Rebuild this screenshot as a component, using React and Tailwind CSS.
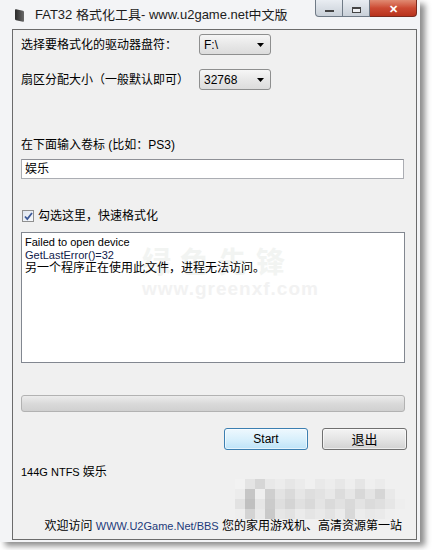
const MOSAIC = [
  ["bg-[#f2f2f2]", "bg-[#e4e4e4]", "bg-[#d6d6d6]", "bg-[#e8e8e8]", "bg-[#ececec]", "bg-[#e6e6e6]", "bg-[#ebebeb]", "bg-[#f0f0f0]", "bg-[#e9e9e9]", "bg-[#ededed]", "bg-[#e7e7e7]", "bg-[#eeeeee]", "bg-[#e5e5e5]", "bg-[#efefef]", "bg-[#ebebeb]", "bg-[#f0f0f0]", "bg-[#f0f0f0]"],
  ["bg-[#ececec]", "bg-[#c6c6c6]", "bg-[#efefef]", "bg-[#cfcfcf]", "bg-[#e3e3e3]", "bg-[#dadada]", "bg-[#e6e6e6]", "bg-[#dedede]", "bg-[#e2e2e2]", "bg-[#e8e8e8]", "bg-[#dcdcdc]", "bg-[#e6e6e6]", "bg-[#d8d8d8]", "bg-[#e4e4e4]", "bg-[#d6d6d6]", "bg-[#e9e9e9]", "bg-[#f0f0f0]"],
  ["bg-[#e2e2e2]", "bg-[#c0c0c0]", "bg-[#e6e6e6]", "bg-[#cbcbcb]", "bg-[#dedede]", "bg-[#d4d4d4]", "bg-[#e0e0e0]", "bg-[#d9d9d9]", "bg-[#e4e4e4]", "bg-[#dadada]", "bg-[#e1e1e1]", "bg-[#d9d9d9]", "bg-[#e3e3e3]", "bg-[#dbdbdb]", "bg-[#dfdfdf]", "bg-[#e6e6e6]", "bg-[#eeeeee]"],
  ["bg-[#eeeeee]", "bg-[#d3d3d3]", "bg-[#e9e9e9]", "bg-[#c9c9c9]", "bg-[#e6e6e6]", "bg-[#e2e2e2]", "bg-[#ebebeb]", "bg-[#e5e5e5]", "bg-[#e9e9e9]", "bg-[#e3e3e3]", "bg-[#ebebeb]", "bg-[#d8d8d8]", "bg-[#ececec]", "bg-[#e8e8e8]", "bg-[#eaeaea]", "bg-[#efefef]", "bg-[#f0f0f0]"],
];

function Combo({ value }) {
  return (
    <div className="flex h-[21px] w-[72px] items-center justify-between rounded-[3px] border border-[#8e8f8f] bg-gradient-to-b from-[#f6f6f6] via-[#e8e8e8] to-[#dcdcdc] pl-[4px] pr-[6px] text-[12px] leading-none text-black">
      <span>{value}</span>
      <svg width="7" height="4" viewBox="0 0 7 4">
        <path d="M0 0h7L3.5 4z" fill="#000" />
      </svg>
    </div>
  );
}

function Mosaic() {
  return (
    <div className="ml-[214px] flex flex-col">
      {MOSAIC.map((row, r) => (
        <div key={r} className="flex">
          {row.map((c, i) => (
            <div key={i} className={`h-[10px] w-[10px] ${c}`} />
          ))}
        </div>
      ))}
    </div>
  );
}

export default function App() {
  return (
    <div className="h-[550px] w-[434px] overflow-hidden bg-white font-['Liberation_Sans','Noto_Sans_CJK_SC',sans-serif] text-black">
      <div className="flex h-[542px] w-[420px] flex-col bg-[#f3f4f6] shadow-[5px_4px_6px_rgba(0,0,0,0.45)]">
        {/* title bar */}
        <div className="relative flex h-[29px] items-start">
          <div className="ml-[15px] mt-[10px] h-[11px] w-[9px] skew-y-[12deg] rounded-[1px] bg-gradient-to-r from-[#2b2b2b] to-[#6a6a6a]" />
          <div className="ml-[11px] mt-[9px] h-[13px] overflow-hidden">
            <div className="-mt-[3px] whitespace-nowrap text-[13px] leading-[18px] text-[#1c1c1c]">
              FAT32 格式化工具- www.u2game.net中文版
            </div>
          </div>
          <div className="absolute right-[3px] top-0 flex">
            <div className="flex h-[17px] w-[28px] items-end justify-center rounded-bl-[4px] border border-t-0 border-[#6f7a86] bg-gradient-to-b from-[#e9edf2] to-[#c9d0d8] pb-[4px]">
              <div className="h-[2px] w-[9px] border border-[#444] bg-white" />
            </div>
            <div className="flex h-[17px] w-[27px] items-end justify-center border border-l-0 border-t-0 border-[#6f7a86] bg-gradient-to-b from-[#e9edf2] to-[#c9d0d8] pb-[3px]">
              <div className="h-[6px] w-[9px] border border-[#444] border-t-2 bg-white/60" />
            </div>
            <div className="flex h-[17px] w-[47px] items-end justify-center rounded-br-[4px] border border-l-0 border-t-0 border-[#7a2a1e] bg-gradient-to-b from-[#e08a72] via-[#cc4a33] to-[#b8321c] pb-[1px] text-[11px] font-bold leading-none text-white">
              ✕
            </div>
          </div>
        </div>

        {/* client area */}
        <div className="ml-[12px] flex h-[511px] w-[405px] flex-col border border-[#6b6b6b] bg-[#f0f0f0] pl-[8px] text-[12px]">
          <div className="mt-[4px] flex h-[21px] items-center">
            <span className="w-[178px] leading-[14px]">选择要格式化的驱动器盘符：</span>
            <Combo value="F:\" />
          </div>
          <div className="mt-[14px] flex h-[21px] items-center">
            <span className="w-[178px] leading-[14px]">扇区分配大小（一般默认即可）</span>
            <Combo value="32768" />
          </div>

          <div className="mt-[48px] h-[14px] leading-[14px]">在下面输入卷标 (比如：PS3)</div>
          <div className="mt-[7px] flex h-[20px] w-[383px] items-center border border-[#abadb3] border-t-[#8e9096] bg-white pl-[3px] leading-none">
            娱乐
          </div>

          <div className="mt-[30px] flex h-[14px] items-center">
            <div className="ml-[1px] flex h-[12px] w-[12px] items-center justify-center border border-[#8f8f8f] bg-gradient-to-br from-[#dfe6f1] to-[#f8f9fb]">
              <svg width="9" height="9" viewBox="0 0 9 9">
                <path d="M1 4.5l2.3 2.6L8 1" fill="none" stroke="#3d5a99" strokeWidth="1.8" />
              </svg>
            </div>
            <span className="ml-[4px] leading-[14px]">勾选这里，快速格式化</span>
          </div>

          <div className="relative mt-[9px] h-[131px] w-[384px] border border-[#828790] bg-white px-[3px] pt-[3px] text-[12px] leading-[13px]">
            <div className="pointer-events-none absolute left-[120px] top-[14px] flex flex-col items-start">
              <span className="text-[29px] font-bold leading-[32px] tracking-[9px] text-[#f2f4f2]">绿色先锋</span>
              <span className="text-[19px] font-bold leading-[20px] tracking-[1px] text-[#f2f2f2]">www.greenxf.com</span>
            </div>
            <div className="relative text-[11px]">Failed to open device</div>
            <div className="relative text-[11px] text-[#10204a]">GetLastError()=32</div>
            <div className="relative">另一个程序正在使用此文件，进程无法访问。</div>
          </div>

          <div className="mt-[32px] h-[17px] w-[384px] rounded-[3px] border border-[#b2b2b2] bg-gradient-to-b from-[#ececec] via-[#dadada] to-[#d0d0d0]" />

          <div className="mt-[16px] flex h-[22px] items-center">
            <button
              type="button"
              className="ml-[203px] flex h-[22px] w-[84px] items-center justify-center rounded-[3px] border border-[#3c7fb1] bg-gradient-to-b from-[#eef8fe] via-[#d9f0fc] to-[#bde3f8] leading-none shadow-[inset_0_0_0_1px_rgba(255,255,255,0.6)]"
            >
              Start
            </button>
            <button
              type="button"
              className="ml-[14px] flex h-[22px] w-[85px] items-center justify-center rounded-[3px] border border-[#707070] bg-gradient-to-b from-[#f4f4f4] via-[#e5e5e5] to-[#d2d2d2] text-[13px] leading-none shadow-[inset_0_0_0_1px_rgba(255,255,255,0.6)]"
            >
              退出
            </button>
          </div>

          <div className="mt-[15px] h-[14px] leading-[14px]">
            <span className="text-[11px]">144G NTFS </span>娱乐
          </div>

          <Mosaic />

          <div className="mt-[0px] h-[14px] w-[381px] whitespace-nowrap text-right leading-[14px]">
            欢迎访问 <span className="text-[11px] text-[#1d3a7a]">WWW.U2Game.Net/BBS</span> 您的家用游戏机、高清资源第一站
          </div>
        </div>
      </div>
    </div>
  );
}
